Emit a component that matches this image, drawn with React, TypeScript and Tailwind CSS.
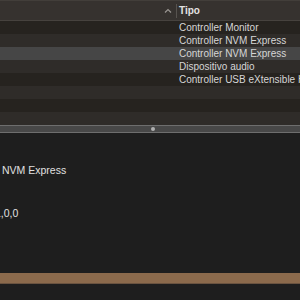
const rows = [
  'Controller Monitor',
  'Controller NVM Express',
  'Controller NVM Express',
  'Dispositivo audio',
  'Controller USB eXtensible Host Controller',
  '',
  '',
  '',
];

export default function App() {
  return (
    <div
      className="flex h-[300px] w-[300px] flex-col overflow-hidden bg-[#1e1e1e] text-[10px] text-[#d6d6d6]"
      style={{ fontFamily: '"Liberation Sans", Arial, sans-serif' }}
    >
      <div className="flex h-[21px] shrink-0 items-center border-b border-t border-[#46423e] border-t-[#423e3a] bg-[#36322f]">
        <div className="flex w-[176px] items-center justify-end pr-[2px]">
          <svg width="8" height="6" viewBox="0 0 8 6" className="mr-[2px] text-[#9a9692]">
            <path d="M1 4.5 L4 1.5 L7 4.5" fill="none" stroke="currentColor" strokeWidth="1.2" />
          </svg>
        </div>
        <div className="h-[14px] w-px bg-[#57534f]" />
        <span className="pl-[2px] font-bold text-[#e2e2e2]">Tipo</span>
      </div>
      {rows.map((label, i) => (
        <div
          key={i}
          className={
            'flex h-[13px] shrink-0 items-center whitespace-nowrap pl-[179px] ' +
            (i === 2 ? 'bg-[#464646]' : i % 2 === 0 ? 'bg-[#26231f]' : 'bg-[#2f2c29]')
          }
        >
          {label}
        </div>
      ))}
      <div className="relative h-[8px] shrink-0 border-y border-[#6e6e6e] bg-[#484848]">
        <div className="absolute left-[151px] top-[1px] h-[4px] w-[4px] rounded-full bg-[#b0b0b0]" />
      </div>
      <div className="flex flex-1 flex-col">
        <div className="mt-[30px] whitespace-nowrap pl-[2px] text-[10.5px] text-[#e0e0e0]">NVM Express</div>
        <div className="-ml-[5px] mt-[27px] whitespace-nowrap text-[10.5px] text-[#e0e0e0]">1,0,0</div>
        <div className="mt-[51px] h-[11px] border-b border-[#6a5340] bg-[#8b6a4c]" />
      </div>
    </div>
  );
}
